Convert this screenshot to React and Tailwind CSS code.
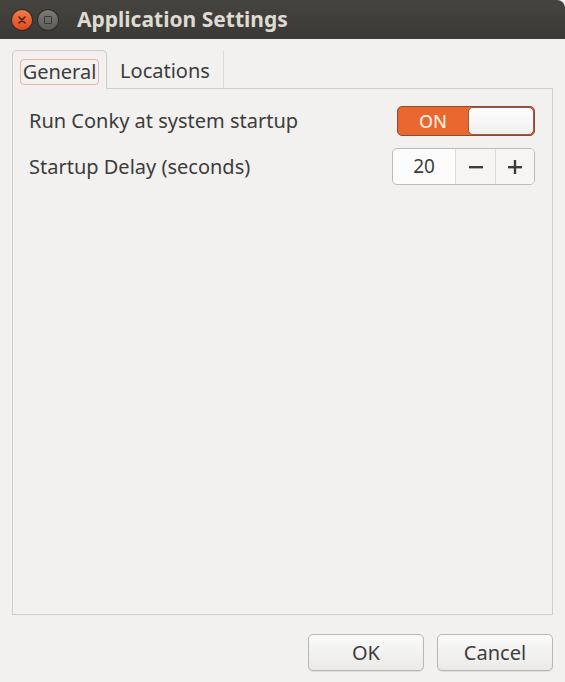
import { useState } from "react";

const font = { fontFamily: '"Noto Sans", "Open Sans", sans-serif' };

const App = () => {
  const [on, setOn] = useState(true);
  const [delay, setDelay] = useState(20);

  return (
    <div className="flex h-[682px] w-[565px] flex-col bg-[#f2f1f0] text-[#3c3c3c]" style={font}>
      {/* title bar */}
      <div className="flex h-[39px] items-center rounded-tr-[8px] bg-gradient-to-b from-[#45443f] to-[#3a3935] pl-[12px]">
        <div className="flex h-[20px] w-[20px] items-center justify-center rounded-full bg-gradient-to-b from-[#f37a4c] to-[#df4a1a] shadow-[0_0_0_1px_#2e2d2a]">
          <svg width="8" height="8" viewBox="0 0 8 8">
            <path d="M1 1L7 7M7 1L1 7" stroke="#4a2418" strokeWidth="1.6" strokeLinecap="round" />
          </svg>
        </div>
        <div className="ml-[6px] flex h-[20px] w-[20px] items-center justify-center rounded-full bg-gradient-to-b from-[#7c7b76] to-[#5c5b57] shadow-[0_0_0_1px_#2e2d2a]">
          <div className="h-[8px] w-[8px] rounded-[1px] border border-[#3a3935]" />
        </div>
        <div className="ml-[19px] text-[21px] font-bold text-[#dfdbd2]">Application Settings</div>
      </div>

      {/* body */}
      <div className="flex flex-1 flex-col px-[12px] pt-[11px]">
        <div className="flex h-[38px] items-stretch">
          <div className="relative z-10 -mb-px flex w-[95px] items-center justify-center rounded-t-[5px] border border-b-0 border-[#cfcdca] bg-[#f2f1f0] pt-[3px]">
            <div className="rounded-[4px] border border-[#eab3a0] px-[2px] text-[20px] leading-[24px]">General</div>
          </div>
          <div className="flex w-[117px] items-center justify-center border-r border-[#dedcda] pt-[4px] text-[20px]">
            Locations
          </div>
        </div>

        <div className="flex h-[527px] flex-col gap-[12px] border border-[#cfcdca] px-[16px] pt-[17px]">
          <div className="flex items-center justify-between">
            <span className="text-[20px]">Run Conky at system startup</span>
            <button
              type="button"
              onClick={() => setOn(!on)}
              className="flex h-[30px] w-[138px] overflow-hidden rounded-[5px] border border-[#8a4a35] bg-[#e9662f] mr-[1px]"
            >
              <span className="flex w-[70px] items-center justify-center text-[18px] font-medium text-[#fbe9dc]">
                {on ? "ON" : "OFF"}
              </span>
              <span className="flex-1 rounded-[5px] border border-[#9a5a44] bg-gradient-to-b from-[#fdfdfd] to-[#f1f0ef]" />
            </button>
          </div>
          <div className="flex items-center justify-between">
            <span className="text-[20px]">Startup Delay (seconds)</span>
            <div className="flex h-[37px] w-[143px] overflow-hidden rounded-[5px] border border-[#bdbbb8] bg-[#fcfcfc] text-[19px] mr-[1px]">
              <span className="flex w-[62px] items-center justify-center">{delay}</span>
              <button
                type="button"
                onClick={() => setDelay(delay - 1)}
                className="flex w-[40px] items-center justify-center border-l border-[#dedcda] bg-[#f6f5f4]"
              >
                <svg width="14" height="14" viewBox="0 0 14 14"><rect x="0" y="6" width="14" height="2.4" fill="#3c3c3c" /></svg>
              </button>
              <button
                type="button"
                onClick={() => setDelay(delay + 1)}
                className="flex flex-1 items-center justify-center border-l border-[#dedcda] bg-[#f6f5f4]"
              >
                <svg width="14" height="14" viewBox="0 0 14 14"><rect x="0" y="6" width="14" height="2.4" fill="#3c3c3c" /><rect x="5.8" y="0" width="2.4" height="14" fill="#3c3c3c" /></svg>
              </button>
            </div>
          </div>
        </div>

        <div className="mt-[19px] flex justify-end gap-[13px]">
          <button type="button" className="h-[37px] w-[116px] rounded-[5px] border border-[#b8b6b3] bg-gradient-to-b from-[#fafafa] to-[#ebeae8] text-[20px] shadow-[0_1px_0_#e0dedb]">
            OK
          </button>
          <button type="button" className="h-[37px] w-[116px] rounded-[5px] border border-[#b8b6b3] bg-gradient-to-b from-[#fafafa] to-[#ebeae8] text-[20px] shadow-[0_1px_0_#e0dedb]">
            Cancel
          </button>
        </div>
      </div>
    </div>
  );
};

export default App;
